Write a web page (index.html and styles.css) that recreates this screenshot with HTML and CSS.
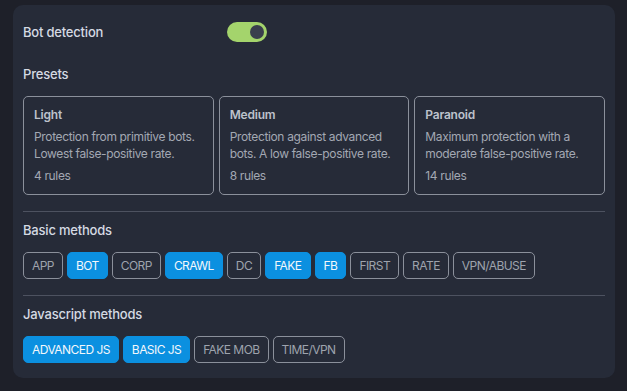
FILE: index.html
```html
<!DOCTYPE html>
<html lang="en">

<head>
  <meta charset="UTF-8">
  <meta name="viewport" content="width=device-width, initial-scale=1.0">
  <title>Bot detection</title>
  <link rel="stylesheet" href="styles.css">
</head>

<body>
  <div class="panel">
    <div class="row-toggle">
      <span class="label">Bot detection</span>
      <span class="switch on"><span class="knob"></span></span>
    </div>

    <div class="section-title first">Presets</div>
    <div class="presets">
      <div class="preset">
        <div class="preset-name">Light</div>
        <div class="preset-desc">Protection from primitive bots. Lowest false-positive rate.</div>
        <div class="preset-rules">4 rules</div>
      </div>
      <div class="preset">
        <div class="preset-name">Medium</div>
        <div class="preset-desc">Protection against advanced bots. A low false-positive rate.</div>
        <div class="preset-rules">8 rules</div>
      </div>
      <div class="preset">
        <div class="preset-name">Paranoid</div>
        <div class="preset-desc">Maximum protection with a moderate false-positive rate.</div>
        <div class="preset-rules">14 rules</div>
      </div>
    </div>

    <hr class="divider">

    <div class="section-title">Basic methods</div>
    <div class="tags">
      <span class="tag">APP</span>
      <span class="tag active">BOT</span>
      <span class="tag">CORP</span>
      <span class="tag active">CRAWL</span>
      <span class="tag">DC</span>
      <span class="tag active">FAKE</span>
      <span class="tag active">FB</span>
      <span class="tag">FIRST</span>
      <span class="tag">RATE</span>
      <span class="tag">VPN/ABUSE</span>
    </div>

    <hr class="divider">

    <div class="section-title">Javascript methods</div>
    <div class="tags">
      <span class="tag active">ADVANCED JS</span>
      <span class="tag active">BASIC JS</span>
      <span class="tag">FAKE MOB</span>
      <span class="tag">TIME/VPN</span>
    </div>
  </div>
</body>

</html>
```

FILE: styles.css
```css
body {
  margin: 0;
  background-color: #1e2029;
  font-family: Inter, "Noto Sans", sans-serif;
  color: #d5dae3;
}

.panel {
  margin: 5px 12px 0 13px;
  padding: 14px 10px 15px 10px;
  background-color: #262b38;
  border-radius: 10px;
}

.row-toggle {
  display: flex;
  align-items: center;
  height: 26px;
}

.label {
  width: 204px;
  font-size: 13px;
  font-weight: 500;
  letter-spacing: -0.2px;
}

.switch {
  width: 40px;
  height: 20px;
  border-radius: 10px;
  background-color: #a4d46c;
  display: flex;
  align-items: center;
  justify-content: flex-end;
  padding: 0 3px;
  box-sizing: border-box;
}

.knob {
  width: 14px;
  height: 14px;
  border-radius: 50%;
  background-color: #3a3f4d;
}

.section-title {
  font-size: 13px;
  font-weight: 500;
  letter-spacing: -0.2px;
  margin: 10px 0 14px;
  line-height: 16px;
}

.section-title.first {
  margin-top: 21px;
}

.presets {
  display: grid;
  grid-template-columns: 1fr 1fr 1fr;
  gap: 5px;
}

.preset {
  border: 1px solid #8b909b;
  border-radius: 5px;
  padding: 10px 10px 10px 10px;
  letter-spacing: -0.35px;
}

.preset-name {
  font-size: 12px;
  font-weight: 600;
  color: #bdc2cc;
  line-height: 16px;
  margin-bottom: 5px;
  letter-spacing: -0.2px;
}

.preset-desc {
  font-size: 12px;
  color: #a3a8b3;
  line-height: 17px;
}

.preset-rules {
  font-size: 12px;
  color: #a3a8b3;
  line-height: 16px;
  margin-top: 6px;
}

.divider {
  border: none;
  border-top: 1px solid #4d5260;
  margin: 16px 0 0;
}

.tags {
  display: flex;
  flex-wrap: wrap;
  gap: 4px;
}

.tag {
  font-size: 12px;
  height: 27px;
  line-height: 25px;
  padding: 0 8px;
  border: 1px solid #8b909b;
  border-radius: 5px;
  color: #9ea3ad;
  box-sizing: border-box;
  letter-spacing: -0.55px;
}

.tag.active {
  background-color: #0b90e0;
  border-color: #0b90e0;
  color: #f3f7fb;
}
```
